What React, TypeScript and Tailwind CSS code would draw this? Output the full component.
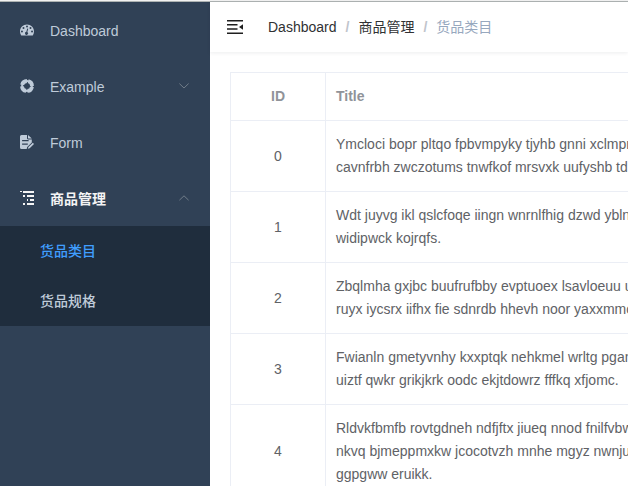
import type { ReactNode } from 'react';

const rows: { id: number; lines: string[] }[] = [
  { id: 0, lines: ['Ymcloci bopr pltqo fpbvmpyky tjyhb gnni xclmprq', 'cavnfrbh zwczotums tnwfkof mrsvxk uufyshb tdbn'] },
  { id: 1, lines: ['Wdt juyvg ikl qslcfoqe iingn wnrnlfhig dzwd yblnm', 'widipwck kojrqfs.'] },
  { id: 2, lines: ['Zbqlmha gxjbc buufrufbby evptuoex lsavloeuu ung', 'ruyx iycsrx iifhx fie sdnrdb hhevh noor yaxxmmoe'] },
  { id: 3, lines: ['Fwianln gmetyvnhy kxxptqk nehkmel wrltg pgand', 'uiztf qwkr grikjkrk oodc ekjtdowrz fffkq xfjomc.'] },
  { id: 4, lines: ['Rldvkfbmfb rovtgdneh ndfjftx jiueq nnod fnilfvbwk', 'nkvq bjmeppmxkw jcocotvzh mnhe mgyz nwnjuk', 'ggpgww eruikk.'] },
];

function DashboardIcon() {
  return (
    <svg className="h-3.5 w-3.5" viewBox="0 0 128 128" fill="currentColor">
      <path
        fillRule="evenodd"
        d="M64 14C28 14 0 42 0 77c0 13 4 24 10 34 1 2 3 3 6 3h96c3 0 5-1 6-3 6-10 10-21 10-34 0-35-28-63-64-63zM18 69a9 9 0 1 1 0 18 9 9 0 0 1 0-18zM32 37a9 9 0 1 1 0 18 9 9 0 0 1 0-18zM64 23a9 9 0 1 1 0 18 9 9 0 0 1 0-18zM96 37a9 9 0 1 1 0 18 9 9 0 0 1 0-18zM110 69a9 9 0 1 1 0 18 9 9 0 0 1 0-18zM70 51c3 1 5 3 4 6l-7 26a14 14 0 1 1-9-2l7-27c1-2 3-4 5-3z"
      />
    </svg>
  );
}

function ExampleIcon() {
  return (
    <svg className="h-3.5 w-3.5" viewBox="0 0 14 14" fill="none" stroke="currentColor">
      <circle cx="7" cy="7" r="5" strokeWidth="3.8" strokeDasharray="6.454 1.4" strokeDashoffset="-0.7" />
      <circle cx="7" cy="7" r="5" strokeWidth="1.8" />
    </svg>
  );
}

function FormIcon() {
  return (
    <svg className="h-3.5 w-3.5" viewBox="0 0 14 14" fill="currentColor">
      <path
        fillRule="evenodd"
        d="M1.5 0H7v3.2c0 .7.5 1.2 1.2 1.2h3.6v3.1L7.2 12l-.5 2H1.5A1.5 1.5 0 0 1 0 12.500v-11A1.500 1.500 0 0 1 1.500 0zM2.100 5v1.200h6.500V5zM2.100 8.500v1.200h5.700V8.500z"
      />
      <path d="M8 0l3.8 3.500H8.600A.6.6 0 0 1 8 2.900zM12.800 7.800l1.200 1.100-4.300 4.300-1.900.6.600-1.700z" />
    </svg>
  );
}

function TreeIcon() {
  return (
    <svg className="h-3.5 w-3.5" viewBox="0 0 14 14" fill="currentColor" shapeRendering="crispEdges">
      <path d="M0 0h2v1H0zM3 0h11v2H3zM3 4h2v2H3zM7 4h7v2H7zM7 8h1v2H7zM10 8h4v2h-4zM3 12h2v2H3zM7 12h7v2H7z" />
    </svg>
  );
}

function Chevron({ up = false }: { up?: boolean }) {
  return (
    <svg className="mr-[21px] ml-auto h-1.5 w-2.5" viewBox="0 0 10 6" fill="none" stroke="#78838f" strokeWidth="0.9">
      <path d={up ? 'M.4 5.200L5 .8l4.600 4.400' : 'M.4.6L5 5l4.600-4.400'} />
    </svg>
  );
}

function MenuItem({ icon, label, active = false, chevron }: { icon: ReactNode; label: string; active?: boolean; chevron?: ReactNode }) {
  return (
    <a className={`flex h-14 items-center pl-5 ${active ? 'font-bold text-[#f4f4f5]' : 'text-[#bfcbd9]'}`}>
      {icon}
      <span className="relative top-px ml-4">{label}</span>
      {chevron}
    </a>
  );
}

function Hamburger() {
  return (
    <svg className="h-3.5 w-4" viewBox="0 0 16 14" fill="#1f1f1f">
      <path d="M0 0h16v1.500H0zM0 4h10.500v1.500H0zM0 8.300h10.500v1.500H0zM0 12.500h16V14H0zM16 4.200v5.600L12 7z" />
    </svg>
  );
}

export default function App() {
  return (
    <div className="flex h-[486px] w-[628px] flex-col overflow-hidden bg-white font-['Liberation_Sans','Noto_Sans_CJK_SC',sans-serif] text-sm">
      <div className="h-0.5 shrink-0 border-b border-[#aeb3b3] bg-[#f2f2f2]" />
      <div className="flex min-h-0 flex-1">
        <nav className="w-[210px] shrink-0 bg-[#304156]">
          <MenuItem icon={<DashboardIcon />} label="Dashboard" />
          <MenuItem icon={<ExampleIcon />} label="Example" chevron={<Chevron />} />
          <MenuItem icon={<FormIcon />} label="Form" />
          <MenuItem icon={<TreeIcon />} label="商品管理" active chevron={<Chevron up />} />
          <div className="bg-[#1f2d3d] font-medium">
            <a className="flex h-[50px] items-center pl-10 text-[#409eff]">货品类目</a>
            <a className="flex h-[50px] items-center pl-10 text-[#bfcbd9]">货品规格</a>
          </div>
        </nav>
        <main className="min-w-0 flex-1">
          <header className="flex h-[50px] items-center pl-[17px] shadow-[0_1px_4px_rgba(0,21,41,0.08)]">
            <Hamburger />
            <div className="ml-[25px] flex items-center whitespace-nowrap text-[#303133]">
              <span>Dashboard</span>
              <span className="mx-[9px] font-bold text-[#c0c4cc]">/</span>
              <span>商品管理</span>
              <span className="mx-[9px] font-bold text-[#c0c4cc]">/</span>
              <span className="text-[#97a8be]">货品类目</span>
            </div>
          </header>
          <div className="mt-5 ml-5 w-[600px] border-t border-l border-[#ebeef5] leading-[23px] text-[#606266]">
            <div className="flex h-12 items-stretch border-b border-[#ebeef5] font-bold text-[#909399]">
              <div className="flex w-[95px] items-center justify-center border-r border-[#ebeef5]">ID</div>
              <div className="flex items-center pl-2.5">Title</div>
            </div>
            {rows.map((row) => (
              <div key={row.id} className="flex border-b border-[#ebeef5]">
                <div className="flex w-[95px] shrink-0 items-center justify-center border-r border-[#ebeef5]">{row.id}</div>
                <div className="py-3 pl-2.5 whitespace-nowrap">
                  {row.lines.map((line) => (
                    <div key={line}>{line}</div>
                  ))}
                </div>
              </div>
            ))}
          </div>
        </main>
      </div>
    </div>
  );
}
